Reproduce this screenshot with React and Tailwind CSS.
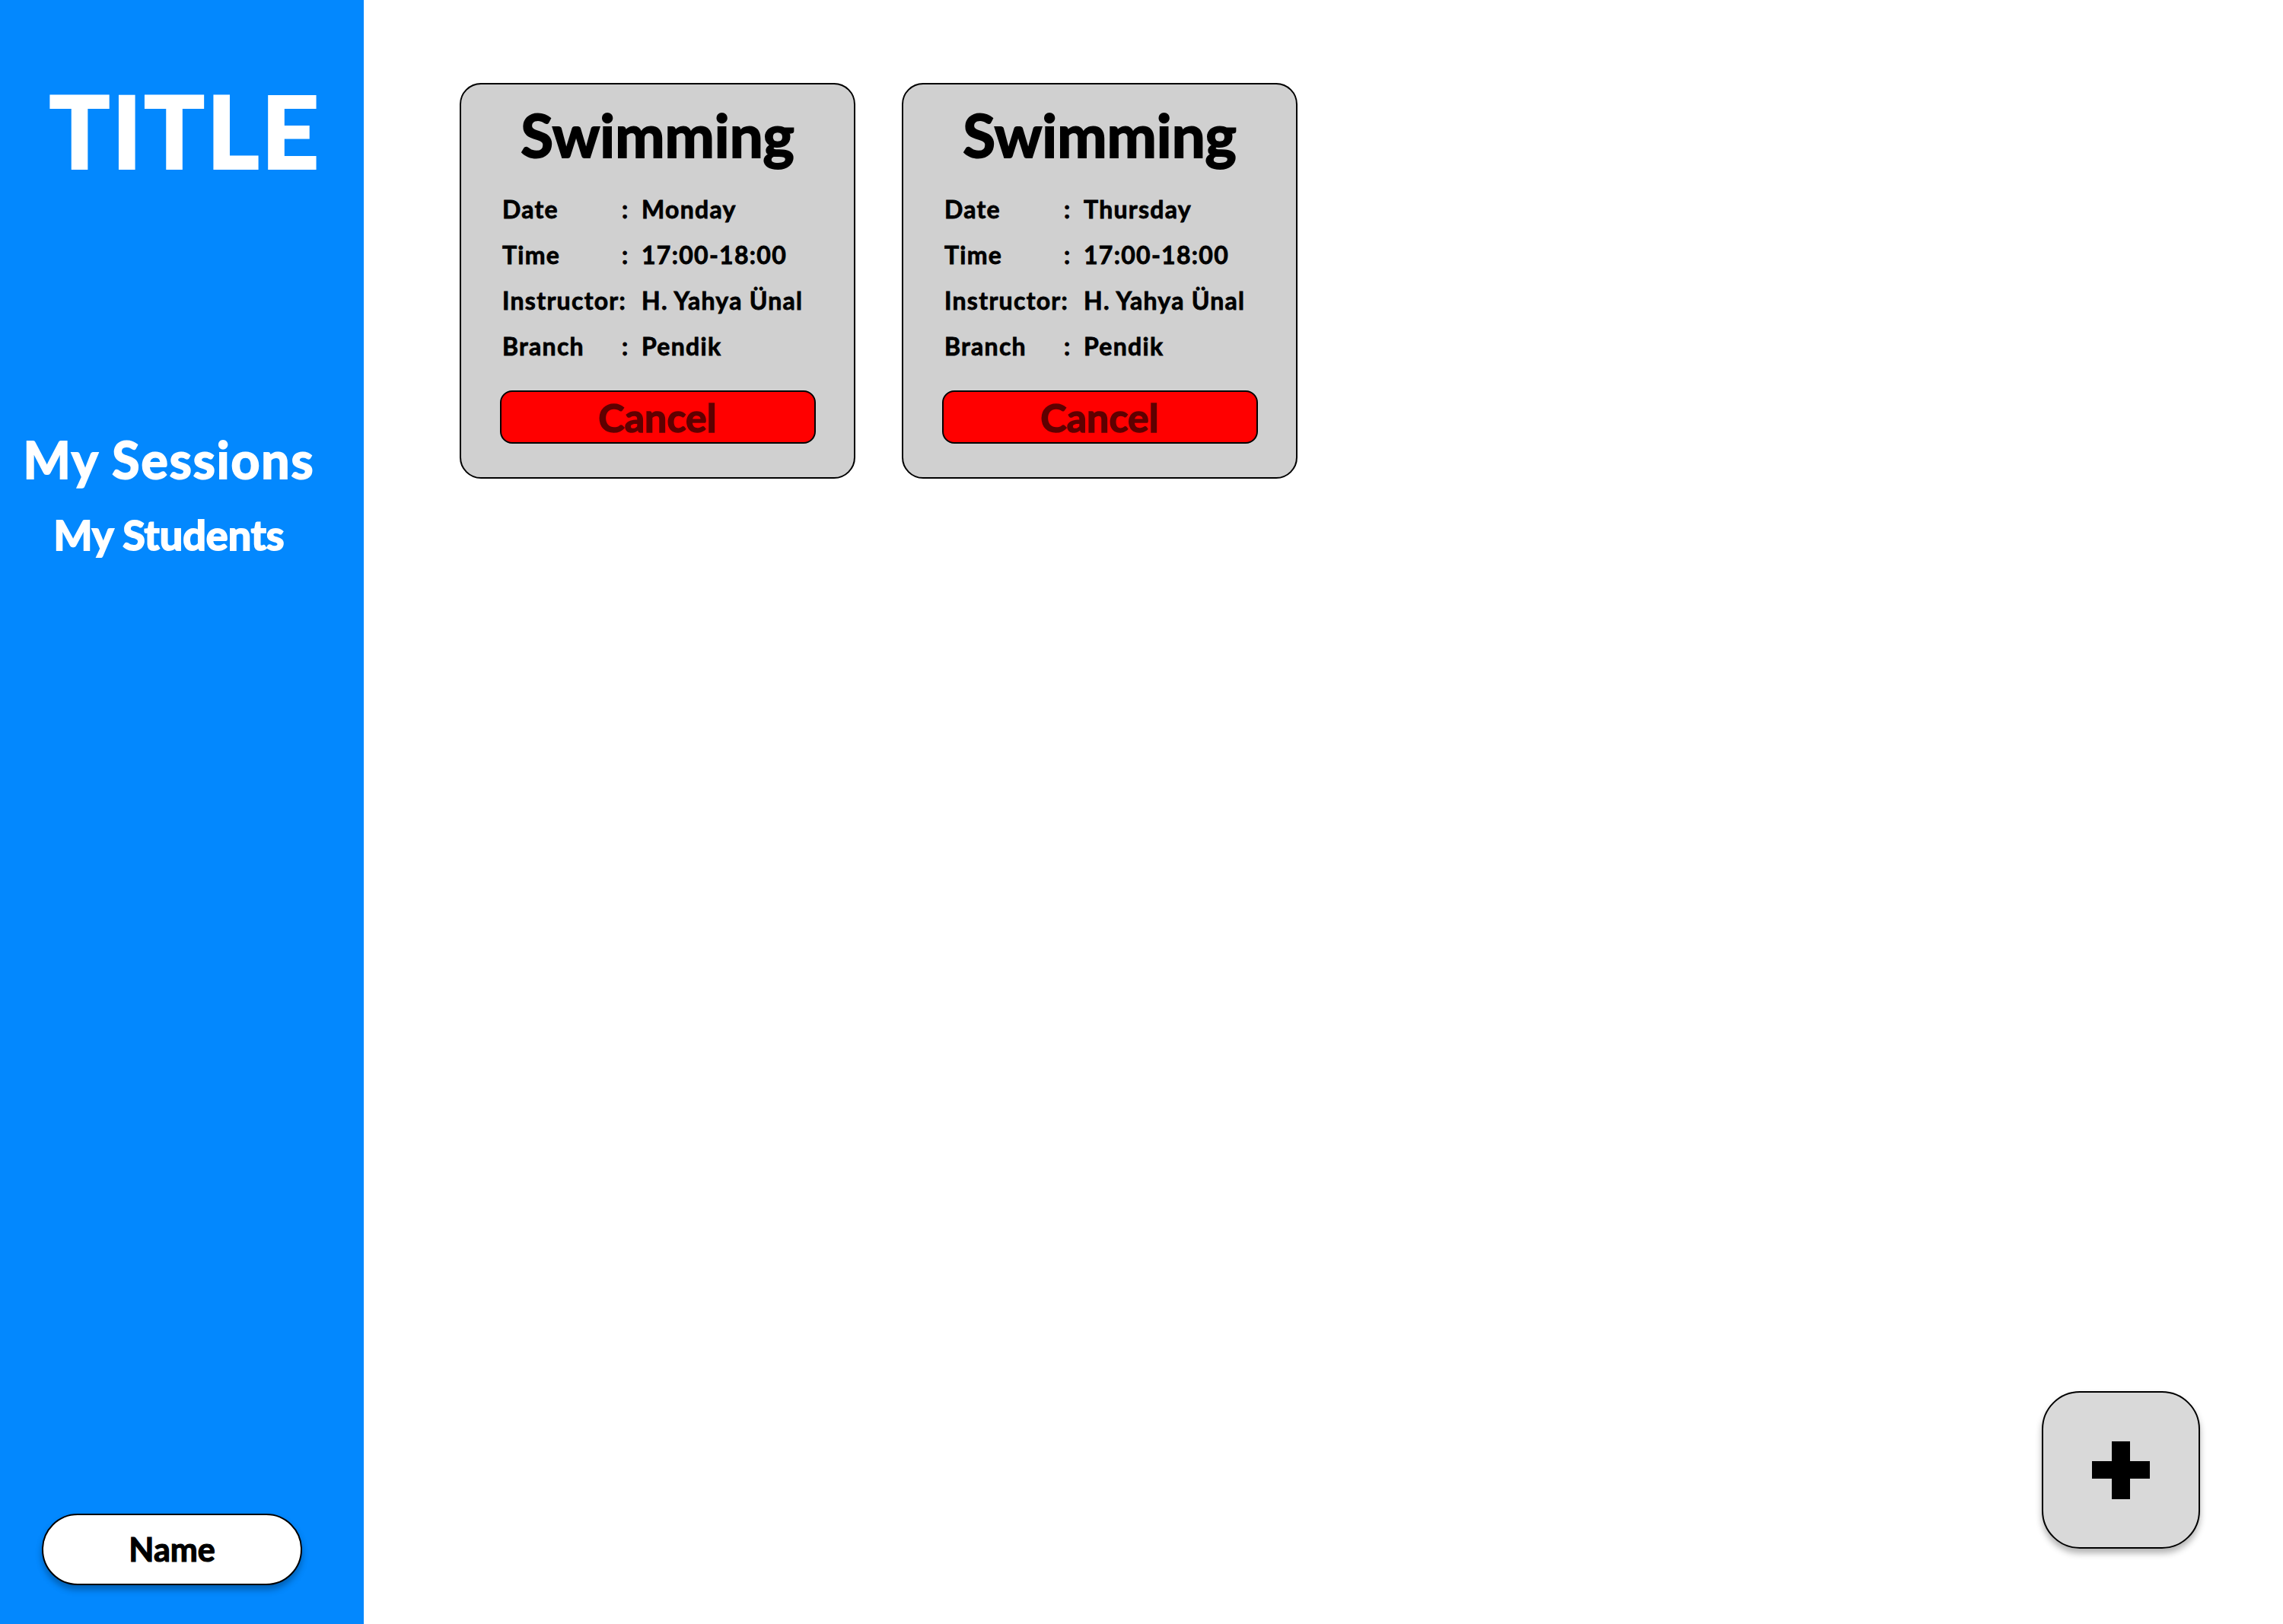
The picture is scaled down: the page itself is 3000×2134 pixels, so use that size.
const sessions = [
  { day: 'Monday', time: '17:00-18:00', instructor: 'H. Yahya Ünal', branch: 'Pendik' },
  { day: 'Thursday', time: '17:00-18:00', instructor: 'H. Yahya Ünal', branch: 'Pendik' },
];

function InfoRow({ label, value, wide }) {
  return (
    <div className="grid grid-cols-[157px_26px_1fr] items-baseline h-[60px] leading-[60px]">
      {wide ? (
        <span className="col-span-2 whitespace-nowrap">{label}:</span>
      ) : (
        <>
          <span>{label}</span>
          <span>:</span>
        </>
      )}
      <span className="whitespace-nowrap">{value}</span>
    </div>
  );
}

function SessionCard({ session }) {
  return (
    <div className="w-[520px] h-[520px] rounded-[28px] border-2 border-black bg-[#d0d0d0] flex flex-col pt-[21px]">
      <h2 className="text-center text-[78px] font-bold leading-[90px] [-webkit-text-stroke:2px_black]">Swimming</h2>
      <div className="mt-[23px] pl-[54px] text-[32px] font-bold tracking-[0.04em] [-webkit-text-stroke:0.8px_black]">
        <InfoRow label="Date" value={session.day} />
        <InfoRow label="Time" value={session.time} />
        <InfoRow label="Instructor" value={session.instructor} wide />
        <InfoRow label="Branch" value={session.branch} />
      </div>
      <button className="mt-[28px] mx-auto h-[70px] w-[415px] rounded-[16px] border-2 border-black bg-[#ff0000] text-[52px] font-bold leading-none text-[#5e0000] [-webkit-text-stroke:1.5px_#5e0000]">
        Cancel
      </button>
    </div>
  );
}

export default function App() {
  return (
    <div className="relative flex w-[3000px] h-[2134px] bg-white text-black" style={{ fontFamily: 'Lato, "Noto Sans", sans-serif' }}>
      {/* Sidebar */}
      <aside className="w-[478px] h-full bg-[#0388fe] flex flex-col text-white">
        <h1 className="mt-[93px] pl-[10px] text-center text-[130px] font-bold leading-[156px] tracking-[4px] [-webkit-text-stroke:4px_white]">
          TITLE
        </h1>
        <nav className="mt-[315px] pr-[34px] flex flex-col items-center font-bold [-webkit-text-stroke:2px_white]">
          <a className="text-[66px] leading-[80px] tracking-[2px]">My Sessions</a>
          <a className="mt-[26px] text-[54px] leading-[66px]">My Students</a>
        </nav>
        <div className="mt-auto mb-[51px] ml-[55px]">
          <button className="w-[342px] h-[94px] rounded-full border-2 border-black bg-white text-black shadow-[0_6px_8px_rgba(0,0,0,0.3)] text-[43px] font-bold [-webkit-text-stroke:1.2px_black]">
            Name
          </button>
        </div>
      </aside>

      {/* Main */}
      <main className="flex-1 pt-[109px] pl-[126px]">
        <div className="flex gap-[61px]">
          {sessions.map((s, i) => (
            <SessionCard key={i} session={s} />
          ))}
        </div>
      </main>

      {/* Add button */}
      <button className="absolute right-[109px] bottom-[99px] w-[208px] h-[207px] rounded-[50px] border-2 border-black bg-[#d9d9d9] shadow-[0_6px_8px_rgba(0,0,0,0.3)] flex items-center justify-center">
        <svg width="76" height="76" viewBox="0 0 76 76">
          <rect x="0" y="26" width="76" height="23" fill="black" />
          <rect x="26" y="0" width="24" height="76" fill="black" />
        </svg>
      </button>
    </div>
  );
}
